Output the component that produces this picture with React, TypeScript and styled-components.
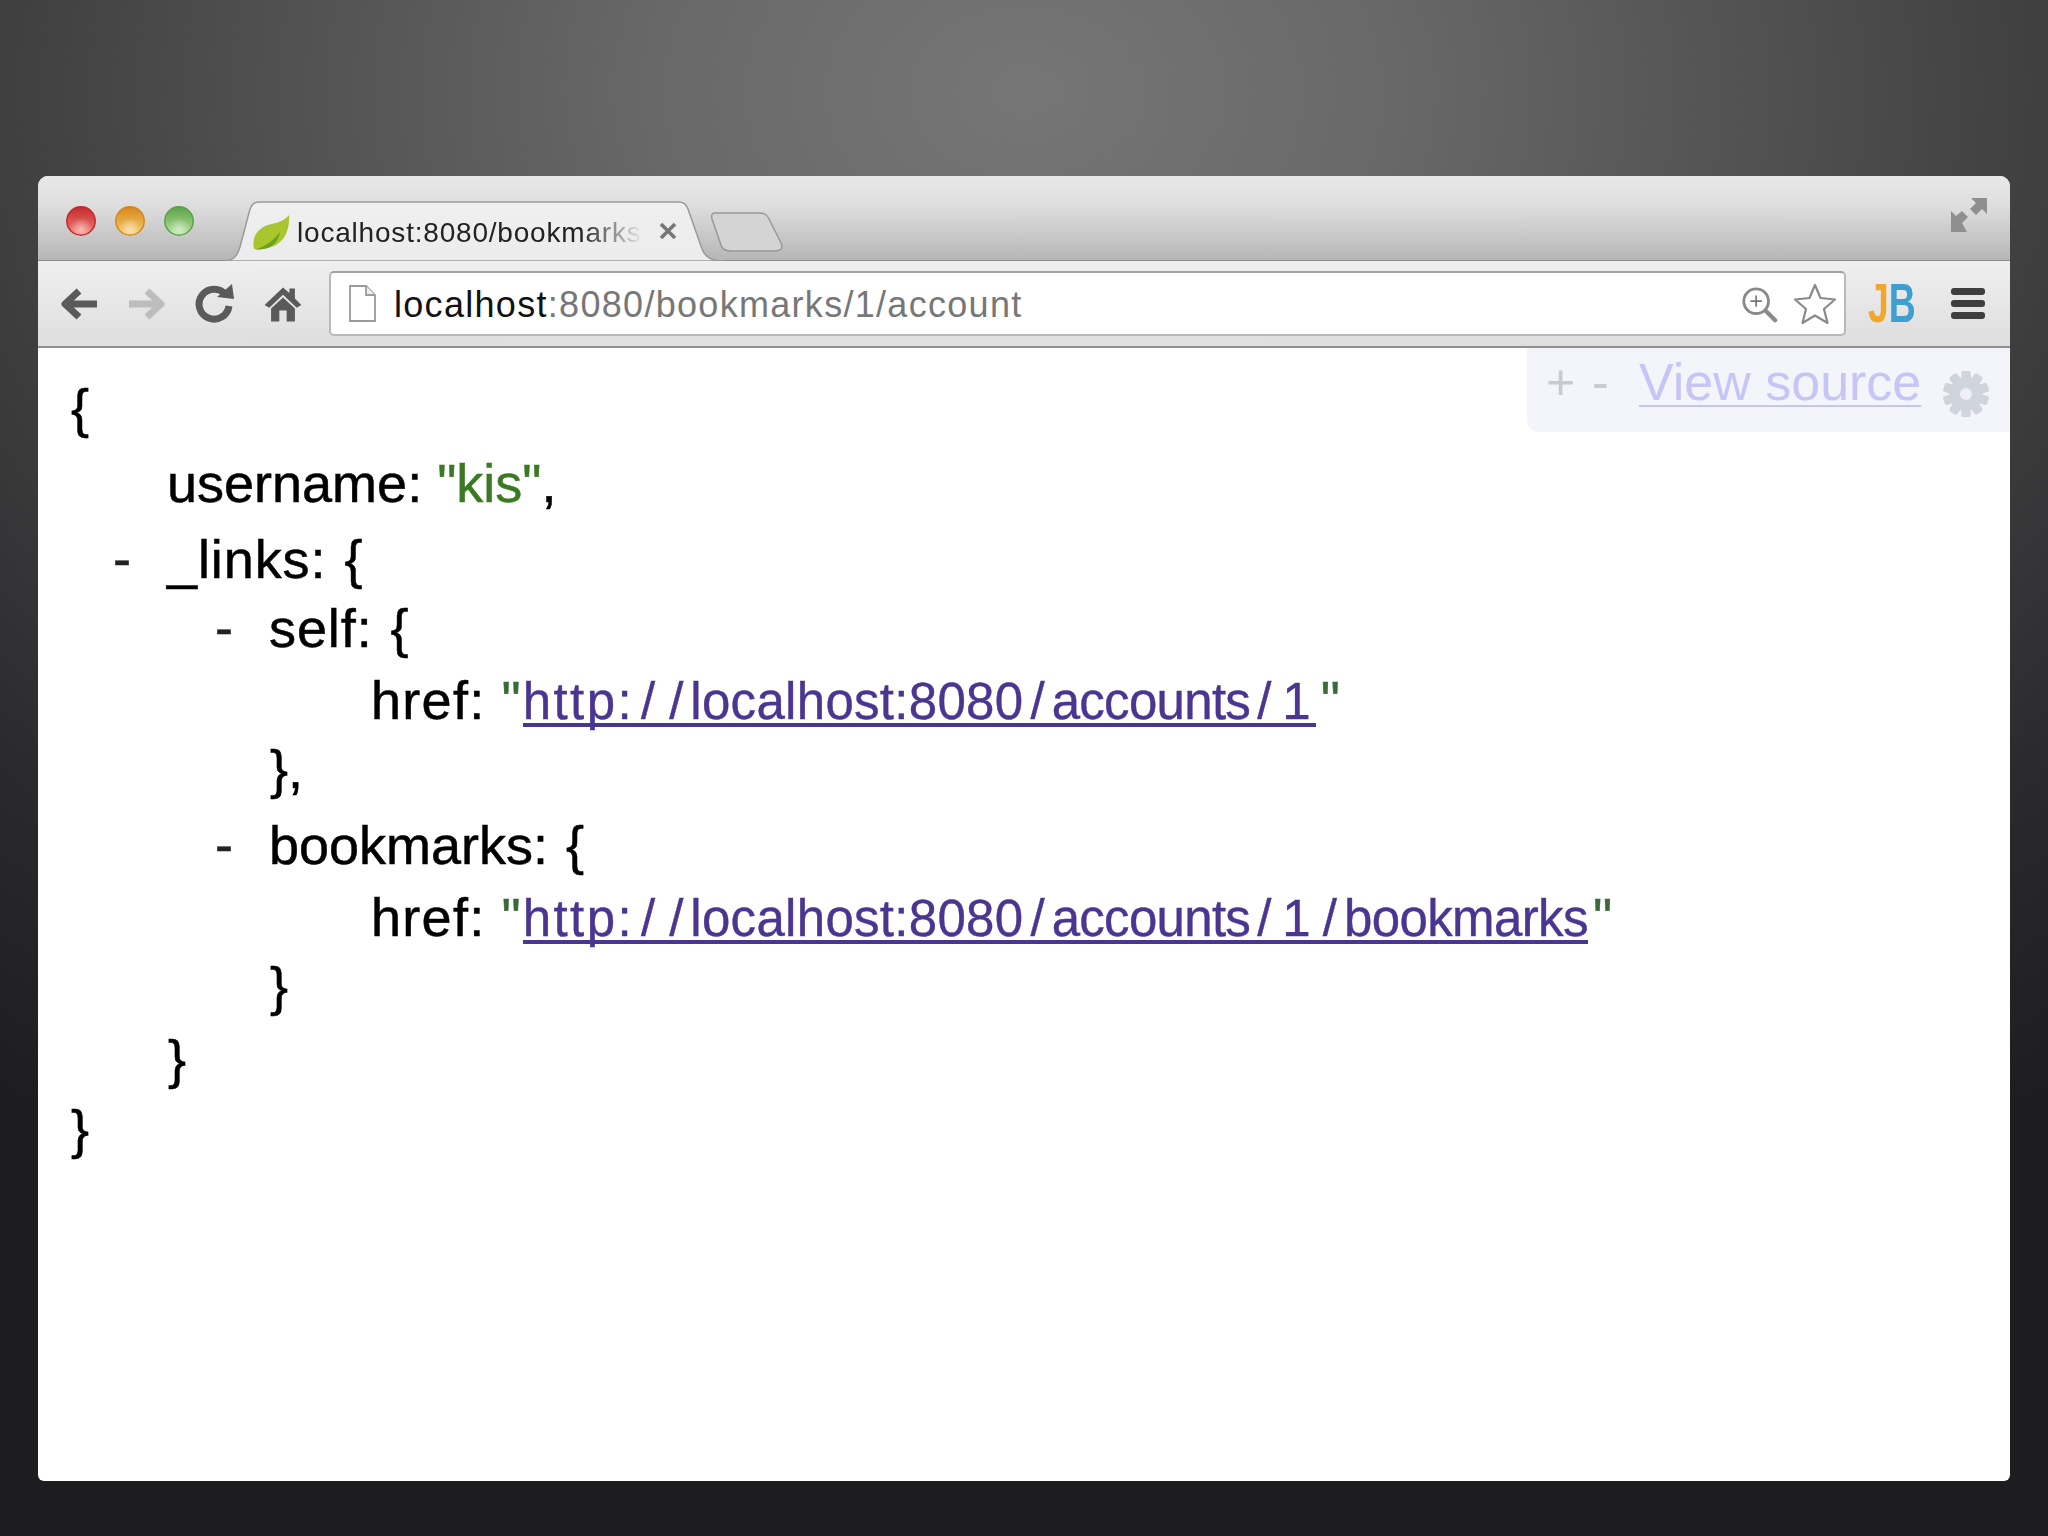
import React from "react";
import styled, { createGlobalStyle } from "styled-components";

const Global = createGlobalStyle`
  html, body { margin: 0; padding: 0; }
  body { width: 2048px; height: 1536px; overflow: hidden; background: #1e1e21; }
`;
const Stage = styled.div`
  width: 2048px; height: 1536px; box-sizing: border-box; padding: 176px 38px 55px;
  background: radial-gradient(ellipse 1700px 1260px at 50% 6%, #767676 0%, #686868 22%, #4a4a4a 50%, #2a2a2d 80%, #1d1d20 100%);
`;
const Window = styled.div`
  height: 100%; display: flex; flex-direction: column; border-radius: 10px 10px 6px 6px; overflow: hidden; background: #fff;
  font-family: "Liberation Sans", Arial, sans-serif;
`;
const TitleBar = styled.div`
  height: 85px; flex: none; display: flex; align-items: flex-end; padding: 0 22px 0 28px; box-sizing: border-box;
  background: linear-gradient(#e8e8e8 0%, #dedede 35%, #b6b6b6 100%); border-bottom: 1px solid #8d8d8d;
`;
const Lights = styled.div`
  display: flex; gap: 19px; align-self: flex-start; margin: 30px 0 0 0;
`;
const Light = styled.span<{ $c: string; $d: string }>`
  width: 30px; height: 30px; border-radius: 50%; box-shadow: inset 0 0 0 1.5px ${p => p.$d};
  background: radial-gradient(circle at 50% 78%, #ffffff88 0, transparent 42%), linear-gradient(${p => p.$d}, ${p => p.$c});
`;
const Tab = styled.div`
  position: relative; width: 500px; height: 60px; margin-left: 29px; margin-bottom: -1px; flex: none;
  display: flex; align-items: center; padding: 0 0 0 29px; box-sizing: border-box;
`;
const TabShape = styled.svg`
  position: absolute; left: 0; top: 0; width: 500px; height: 60px;
`;
const Favicon = styled.svg`
  position: relative; width: 38px; height: 36px; flex: none; margin-top: 4px;
`;
const TabTitle = styled.span`
  position: relative; width: 346px; margin-left: 7px; margin-top: 3px; overflow: hidden; white-space: nowrap; font-size: 28px; letter-spacing: .8px; color: #222;
  -webkit-mask-image: linear-gradient(90deg, #000 82%, transparent 100%);
  mask-image: linear-gradient(90deg, #000 82%, transparent 100%);
`;
const CloseIcon = styled.svg`
  position: relative; width: 18px; height: 18px; margin-left: 16px; flex: none;
`;
const NewTab = styled.svg`
  width: 82px; height: 42px; margin: 0 0 7px -16px; flex: none;
`;
const Spacer = styled.div`flex: 1;`;
const Expand = styled.svg`
  width: 38px; height: 36px; align-self: flex-start; margin-top: 21px;
`;
const Toolbar = styled.div`
  height: 87px; flex: none; display: flex; align-items: center; padding: 0 20px 0 19px; box-sizing: border-box;
  background: linear-gradient(#efefef, #dedede); border-bottom: 2px solid #8f8f8f;
`;
const NavIcon = styled.svg<{ $gap?: number }>`
  width: 44px; height: 44px; flex: none; margin-right: ${p => p.$gap ?? 24}px;
`;
const Omnibox = styled.div`
  width: 1517px; height: 65px; flex: none; box-sizing: border-box; margin-left: 24px; display: flex; align-items: center; padding: 0 6px 0 16px;
  background: #fff; border: 2px solid #b9b9b9; border-top-color: #a2a2a2; border-radius: 5px;
`;
const PageIcon = styled.svg`width: 30px; height: 38px; flex: none;`;
const Url = styled.div`
  flex: 1; margin-left: 17px; margin-top: 2px; font-size: 36px; letter-spacing: 1.3px; color: #777; white-space: nowrap;
`;
const Host = styled.span`color: #111;`;
const ZoomIcon = styled.svg`width: 38px; height: 40px; flex: none;`;
const StarIcon = styled.svg`width: 46px; height: 44px; flex: none; margin-left: 14px;`;
const Logo = styled.div`
  margin-left: 22px; width: 48px; flex: none; font-weight: 700; font-size: 55px; line-height: 1; white-space: nowrap;
`;
const LogoText = styled.span`
  display: inline-block; transform: scaleX(.68); transform-origin: left center;
`;
const Orange = styled.span`color: #f0a72e;`;
const Blue = styled.span`color: #3f9fd0;`;
const Menu = styled.div`
  margin-left: 35px; width: 34px; flex: none; display: flex; flex-direction: column; gap: 5px;
`;
const MenuBar = styled.span`height: 7px; border-radius: 3px; background: #3e3e3e;`;
const Content = styled.div`
  position: relative; flex: 1; padding: 27px 0 0 32px; color: #000;
`;
const Line = styled.div<{ $level: number; $h: number }>`
  height: ${p => p.$h}px; line-height: 72px; white-space: nowrap; display: flex;
  padding-left: ${p => (p.$level ? p.$level * 102 - 5 : 0)}px; font-size: 54px; -webkit-text-stroke: .5px currentColor;
`;
const Toggle = styled.span`
  width: 0; margin-left: -54px; margin-right: 54px; display: inline-block; font-size: 54px; line-height: 70px; color: #222;
`;
const Code = styled.span`
  display: inline-block; white-space: pre; word-spacing: 3px;
`;
const Brace = styled(Code)`margin: -3px 0 0 1px;`;
const Key = styled.span`letter-spacing: 1.3px;`;
const Word = styled.span`letter-spacing: .9px;`;
const Str = styled.span`color: #3a7a22; margin-left: -3px;`;
const Quote = styled.span`color: #3a6a3a; margin: 0 2px 0 -2px;`;
const EndQuote = styled.span`color: #3a6a3a; margin-left: 5px;`;
const Link = styled.a`
  color: #4a3590; font-size: 51px; -webkit-text-stroke: .4px currentColor;
  background: linear-gradient(#4a3590, #4a3590) no-repeat left bottom 3px / 100% 4px;
`;
const Slash = styled.span`padding: 0 7px;`;
const Seg = styled.span<{ $ls: number }>`letter-spacing: ${p => p.$ls}px;`;
const One = styled.span`padding: 0 5px 0 4px;`;
const SourceBar = styled.div`
  position: absolute; right: 0; top: 0; width: 483px; height: 84px; box-sizing: border-box; display: flex; align-items: center; padding: 0 20px 16px 19px;
  background: #f4f4fb; border-radius: 0 0 0 12px; color: #c9c9d4;
`;
const Plus = styled.span`font-size: 50px; line-height: 1; width: 46px;`;
const Minus = styled.span`font-size: 50px; line-height: 1; width: 47px;`;
const Source = styled.a`
  font-size: 52px; color: #c6c6f6; text-decoration: underline; text-decoration-thickness: 2px; text-underline-offset: 5px; white-space: nowrap;
`;
const Gear = styled.svg`width: 46px; height: 48px; margin-left: 22px; margin-top: 24px; flex: none;`;

const BaseUrl = () => (
  <>
    <Seg $ls={2.4}>http:</Seg>
    <Slash>/</Slash>
    <Slash>/</Slash>
    <Seg $ls={0.3}>localhost:8080</Seg>
    <Slash>/</Slash>
    <Seg $ls={-0.7}>accounts</Seg>
    <Slash>/</Slash>
    <One>1</One>
  </>
);

const gearTeeth = Array.from({ length: 10 }, (_, i) => i * 36);

export default function App() {
  return (
    <Stage>
      <Global />
      <Window>
        <TitleBar>
          <Lights>
            <Light $c="#f57f76" $d="#c2292a" />
            <Light $c="#f6cf6c" $d="#d4861c" />
            <Light $c="#b5e39a" $d="#5aa048" />
          </Lights>
          <Tab>
            <TabShape viewBox="0 0 500 60">
              <defs>
                <linearGradient id="tabg" x1="0" y1="0" x2="0" y2="1">
                  <stop offset="0" stopColor="#efefef" />
                  <stop offset="1" stopColor="#ececec" />
                </linearGradient>
              </defs>
              <path d="M0 60 C10 60 14 56 17 46 L27 8 C29 3 31 1 37 1 L455 1 C461 1 463 3 465 8 L479 48 C482 56 488 60 500 60 Z" fill="url(#tabg)" stroke="#9a9a9a" strokeWidth="1.5" />
            </TabShape>
            <Favicon viewBox="0 0 38 36">
              <path d="M2 34 C-1 20 8 11 20 9 C28 7 33 5 37 0 C38 12 34 26 22 31 C14 34 7 34 2 34 Z" fill="#a9c62e" />
              <path d="M3 35 C10 32 20 28 28 17 C27 26 20 33 12 34 Z" fill="#6fa01e" />
            </Favicon>
            <TabTitle>localhost:8080/bookmarks</TabTitle>
            <CloseIcon viewBox="0 0 18 18"><path d="M2 2 L16 16 M16 2 L2 16" stroke="#777" strokeWidth="3.6" /></CloseIcon>
          </Tab>
          <NewTab viewBox="0 0 82 42">
            <path d="M8 2 L52 2 C58 2 60 4 62 8 L74 32 C76 37 74 40 68 40 L24 40 C18 40 15 38 14 34 L5 8 C4 4 5 2 8 2 Z" fill="#d4d4d4" stroke="#989898" strokeWidth="1.5" />
          </NewTab>
          <Spacer />
          <Expand viewBox="0 0 38 36">
            <path d="M21 1 H37 V17 L32 12 L26 18 L20 12 L26 6 Z" fill="#8f8f8f" />
            <path d="M1 14 L6 19 L12 14 L18 20 L12 26 L17 35 H1 Z" fill="#8f8f8f" />
          </Expand>
        </TitleBar>
        <Toolbar>
          <NavIcon viewBox="0 0 44 44"><path d="M40 22 H10 M22 9 L8 22 L22 35" fill="none" stroke="#5a5a5a" strokeWidth="7" strokeLinejoin="round" /></NavIcon>
          <NavIcon viewBox="0 0 44 44"><path d="M4 22 H34 M22 9 L36 22 L22 35" fill="none" stroke="#bdbdbd" strokeWidth="7" strokeLinejoin="round" /></NavIcon>
          <NavIcon viewBox="0 0 44 44"><path d="M33 13 A15 15 0 1 0 36 24" fill="none" stroke="#5a5a5a" strokeWidth="7" /><path d="M24 15 L41 17 L39 2 Z" fill="#5a5a5a" /></NavIcon>
          <NavIcon viewBox="-2 0 48 44" $gap={0}><path d="M22 4 L2 23 L7 26 L22 12 L37 26 L42 23 L35 16 V5 H29 V10 Z" fill="#5a5a5a" /><path d="M9 27 L22 15 L35 27 V41 H26 V29 H18 V41 H9 Z" fill="#5a5a5a" /></NavIcon>
          <Omnibox>
            <PageIcon viewBox="0 0 30 38">
              <path d="M3 1 H19 L28 10 V36 H3 Z" fill="#fff" stroke="#9a9a9a" strokeWidth="1.8" />
              <path d="M19 1 V10 H28" fill="#eee" stroke="#9a9a9a" strokeWidth="1.8" />
            </PageIcon>
            <Url><Host>localhost</Host>:8080/bookmarks/1/account</Url>
            <ZoomIcon viewBox="0 0 40 40">
              <circle cx="17" cy="17" r="13" fill="none" stroke="#8a8a8a" strokeWidth="3" />
              <path d="M27 27 L37 37" stroke="#8a8a8a" strokeWidth="4.5" strokeLinecap="round" />
              <path d="M11 17 H23 M17 11 V23" stroke="#777" strokeWidth="1.8" />
            </ZoomIcon>
            <StarIcon viewBox="0 0 44 44">
              <path d="M22 3 L27.5 16 L42 17.5 L31 27 L34.5 41 L22 33.5 L9.5 41 L13 27 L2 17.5 L16.5 16 Z" fill="#fff" stroke="#8a8a8a" strokeWidth="2.2" strokeLinejoin="round" />
            </StarIcon>
          </Omnibox>
          <Logo><LogoText><Orange>J</Orange><Blue>B</Blue></LogoText></Logo>
          <Menu><MenuBar /><MenuBar /><MenuBar /></Menu>
        </Toolbar>
        <Content>
          <SourceBar>
            <Plus>+</Plus>
            <Minus>-</Minus>
            <Source>View source</Source>
            <Gear viewBox="0 0 46 48">
              {gearTeeth.map(a => (
                <rect key={a} x="18.5" y="1" width="9" height="46" rx="2" fill="#d0d4dc" transform={`rotate(${a} 23 24)`} />
              ))}
              <circle cx="23" cy="24" r="17" fill="#d0d4dc" />
              <circle cx="23" cy="24" r="6" fill="#eef0f6" />
            </Gear>
          </SourceBar>
          <Line $level={0} $h={72}><Brace>{"{"}</Brace></Line>
          <Line $level={1} $h={76}><Code>username: <Str>"kis"</Str>,</Code></Line>
          <Line $level={1} $h={69}><Toggle>-</Toggle><Code><Word>_links:</Word> {"{"}</Code></Line>
          <Line $level={2} $h={72}><Toggle>-</Toggle><Code><Word>self:</Word> {"{"}</Code></Line>
          <Line $level={3} $h={72}><Code><Key>href:</Key><Quote> "</Quote><Link><BaseUrl /></Link><EndQuote>"</EndQuote></Code></Line>
          <Line $level={2} $h={73}><Brace>{"},"}</Brace></Line>
          <Line $level={2} $h={72}><Toggle>-</Toggle><Code>bookmarks: {"{"}</Code></Line>
          <Line $level={3} $h={72}><Code><Key>href:</Key><Quote> "</Quote><Link><BaseUrl /><Slash>/</Slash><Seg $ls={-0.6}>bookmarks</Seg></Link><EndQuote>"</EndQuote></Code></Line>
          <Line $level={2} $h={73}><Brace>{"}"}</Brace></Line>
          <Line $level={1} $h={70}><Brace>{"}"}</Brace></Line>
          <Line $level={0} $h={72}><Brace>{"}"}</Brace></Line>
        </Content>
      </Window>
    </Stage>
  );
}
